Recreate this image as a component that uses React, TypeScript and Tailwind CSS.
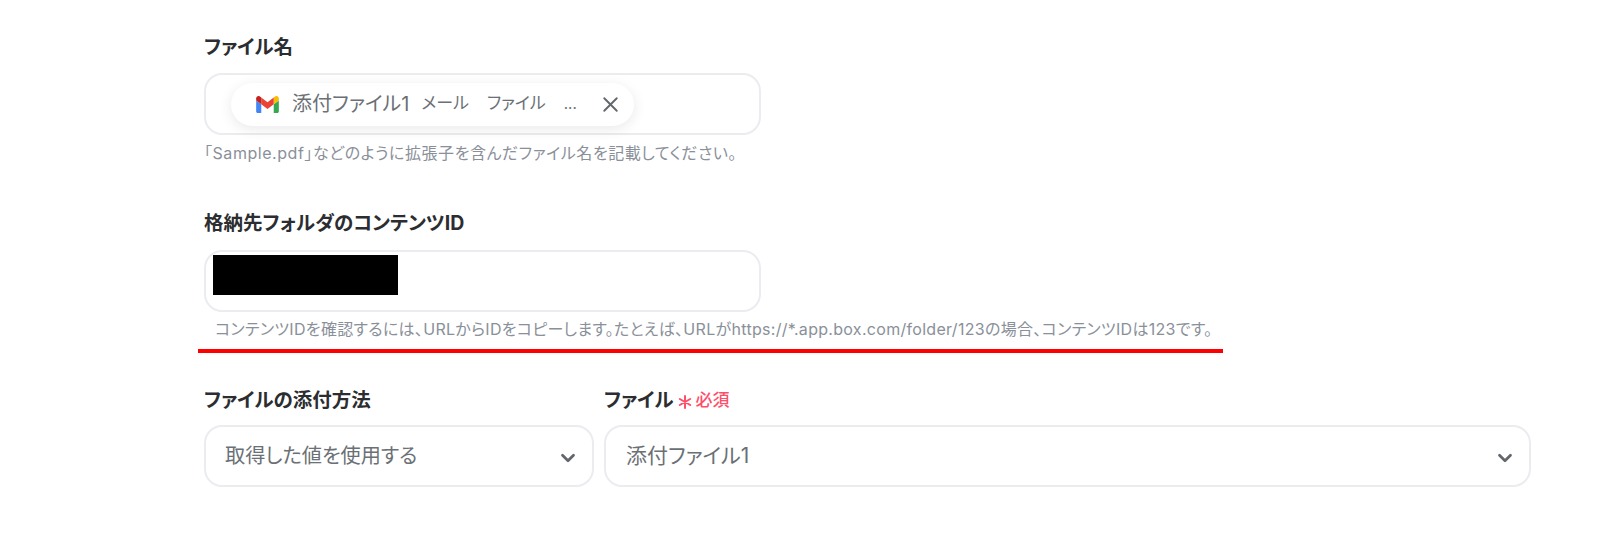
import { ChevronDown, X } from "lucide-react";

const font = "font-['Inter','Noto_Sans_CJK_JP',sans-serif]";

function GmailIcon() {
  return (
    <svg viewBox="0 0 24 18" className="h-[17px] w-[23px] shrink-0">
      <path d="M1.6 18h3.8V8.8L0 4.7v11.7C0 17.3.7 18 1.6 18z" fill="#4285F4" />
      <path d="M18.6 18h3.8c.9 0 1.6-.7 1.6-1.6V4.7l-5.4 4.1z" fill="#34A853" />
      <path d="M18.6 1.7v7.1L24 4.7V2.5c0-2-2.3-3.2-3.9-2z" fill="#FBBC04" />
      <path d="M5.4 8.8V1.7L12 6.6l6.6-5.1v7.3L12 13.7z" fill="#EA4335" />
      <path d="M0 2.5v2.2l5.4 4.1V1.7L3.9.5C2.3-.7 0 .5 0 2.5z" fill="#C5221F" />
    </svg>
  );
}

function Select({ value, className }: { value: string; className: string }) {
  return (
    <div className={`flex h-[62px] items-center justify-between rounded-[18px] border-2 border-[#eaecf0] pr-[13px] ${className}`}>
      <span className="text-[#6b7075]">{value}</span>
      <ChevronDown size={22} strokeWidth={3} className="mt-[4px] text-[#63676b]" />
    </div>
  );
}

export default function App() {
  return (
    <div className={`${font} h-[550px] w-[1600px] overflow-hidden bg-white pl-[204px] pt-[35px] [font-feature-settings:'palt']`}>
      <div className="text-[19.5px] font-bold leading-6 text-[#2b2d30]">ファイル名</div>
      <div className="mt-[14px] flex h-[62px] w-[557px] items-center rounded-[18px] border-2 border-[#eaecf0] pl-[25px]">
        <div className="flex h-[43px] w-[403px] items-center rounded-full bg-white pl-[25px] pr-[11px] shadow-[0_3px_14px_rgba(0,0,0,0.09)]">
          <GmailIcon />
          <span className="ml-[13px] text-[20px] text-[#6b7075]">添付ファイル1</span>
          <span className="ml-[12px] text-[17px] text-[#6b7075]">メール</span>
          <span className="ml-[18px] text-[17px] text-[#6b7075]">ファイル</span>
          <span className="ml-[18px] text-[15px] text-[#6b7075]">...</span>
          <X size={25} strokeWidth={1.8} className="ml-auto text-[#63676b]" />
        </div>
      </div>
      <div className="mt-[8px] text-[16px] leading-5 tracking-[0.55px] text-[#8a9099]">「Sample.pdf」などのように拡張子を含んだファイル名を記載してください。</div>

      <div className="mt-[48px] text-[19.5px] font-bold leading-6 text-[#2b2d30]">格納先フォルダのコンテンツID</div>
      <div className="mt-[15px] flex h-[62px] w-[557px] items-center rounded-[18px] border-2 border-[#eaecf0] pl-[7px]">
        <div className="mb-[12px] h-[40px] w-[185px] bg-black" />
      </div>
      <div className="mt-[7px] pl-[11px] text-[16px] leading-5 tracking-[0.3px] text-[#8a9099]">
        コンテンツIDを確認するには、URLからIDをコピーします。たとえば、URLがhttps://*.app.box.com/folder/123の場合、コンテンツIDは123です。
      </div>
      <div className="-ml-[6px] mt-[10px] h-[4px] w-[1025px] bg-[#ff0000]" />

      <div className="mt-[35px] flex gap-[10px]">
        <div className="w-[390px]">
          <div className="text-[19.5px] font-bold leading-6 text-[#2b2d30]">ファイルの添付方法</div>
          <Select value="取得した値を使用する" className="mt-[13px] pl-[19px] text-[20.2px]" />
        </div>
        <div className="w-[927px]">
          <div className="flex items-center text-[19.5px] font-bold leading-6 text-[#2b2d30]">
            ファイル
            <svg viewBox="0 0 14 14" className="ml-[4px] mt-[3px] h-[14px] w-[14px]" stroke="#ff4d6a" strokeWidth="2" strokeLinecap="round">
              <path d="M7 1v12M1.8 4l10.4 6M12.2 4L1.8 10" />
            </svg>
            <span className="ml-[4px] text-[17px] font-medium text-[#ff4d6a]">必須</span>
          </div>
          <Select value="添付ファイル1" className="mt-[13px] pl-[20px] text-[21px]" />
        </div>
      </div>
    </div>
  );
}
